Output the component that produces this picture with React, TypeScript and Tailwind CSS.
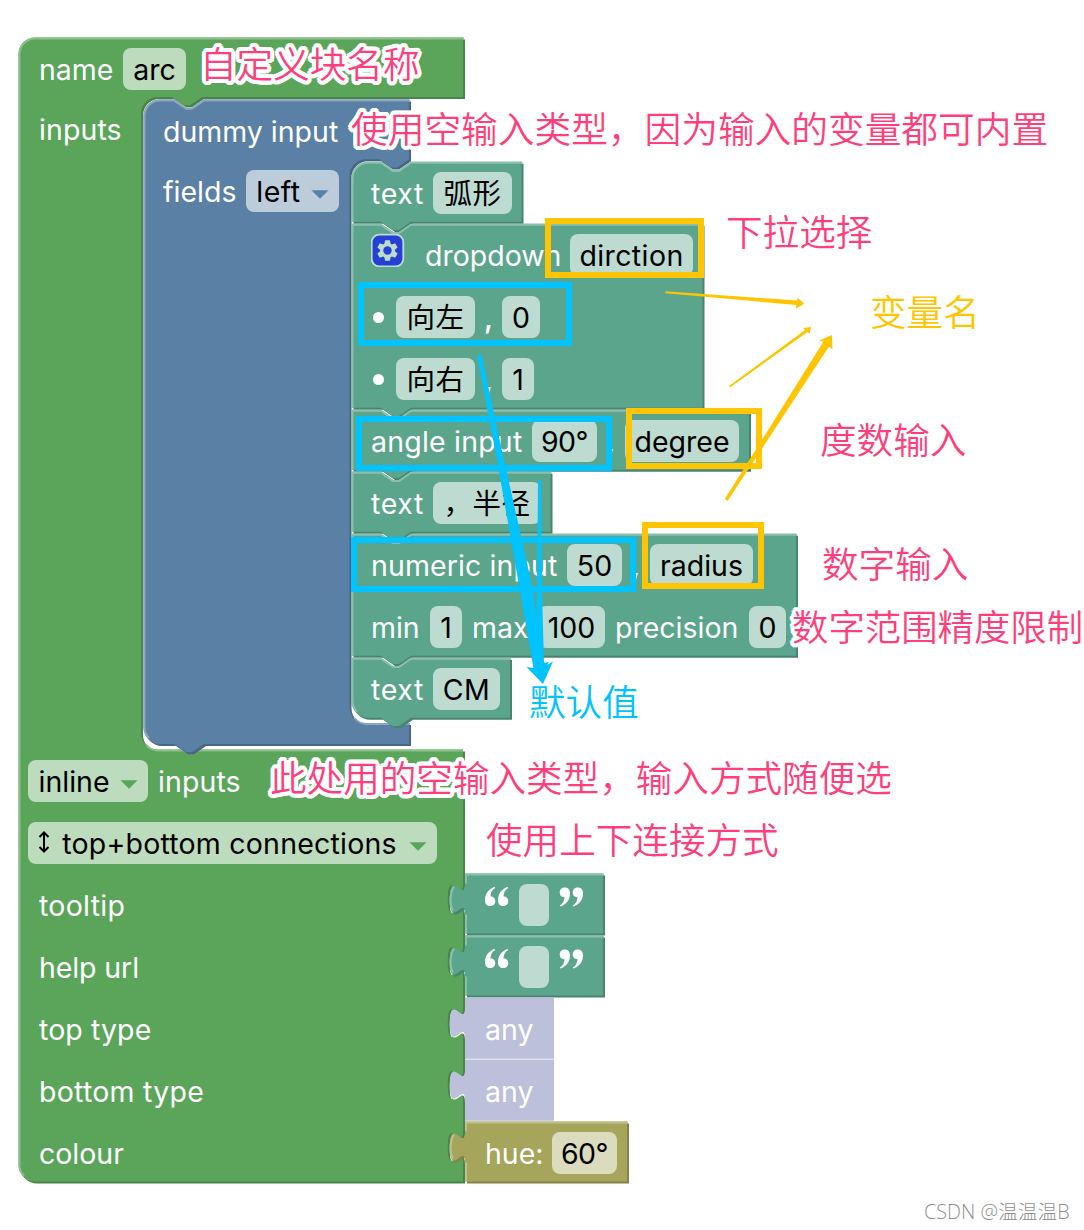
import type { ReactNode } from "react";

const palette = {
  green: { main: "#5ba55b", light: "#8cc08c", dark: "#498449" },
  blue: { main: "#5b80a5", light: "#8ca6c0", dark: "#496684" },
  teal: { main: "#5ba58c", light: "#8cc0ae", dark: "#498470" },
  olive: { main: "#a5a55b", light: "#c0c08c", dark: "#848449" },
  lilac: { main: "#bdc0db", light: "#bdc0db", dark: "#ffffff" },
};
type Hue = keyof typeof palette;

/** Bevelled puzzle outline: shadow edge, face, then highlight. */
function Outline({ hue, face, light, x = 0, y = 0 }: { hue: Hue; face: string; light: string; x?: number; y?: number }) {
  const c = palette[hue];
  return (
    <svg className="pointer-events-none absolute left-0 top-0 overflow-visible" width="1" height="1" aria-hidden="true">
      <g transform={`translate(${-x} ${-y})`}>
        <path d={face} fill={c.dark} transform={hue === "lilac" ? "translate(.8 .8)" : "translate(2 2)"} />
        <path d={face} fill={c.main} />
        <path d={light} fill="none" stroke={c.light} strokeWidth="2" />
      </g>
    </svg>
  );
}

const notch = "l12,8.3 h6 l12,-8.3";
const notchBack = "l-12,8.3 h-6 l-12,-8.3";
const tab = "c0,20.7 -15.2,-16.6 -15.2,15.5 s15.2,-5.2 15.2,15.5";

const greenFace = `M18.5,54 A16.5,16.5 0 0 1 35,37.5 H463 V97 H202 ${notchBack} H157.5 A16.5,16.5 0 0 0 141,113.5 V733 A16.5,16.5 0 0 0 157.5,749.5 H463 V883.5 ${tab} V945.5 ${tab} V1007.5 ${tab} V1069.5 ${tab} V1131.5 ${tab} V1181.5 H35 A16.5,16.5 0 0 1 18.5,1165 Z`;
const greenLight = "M24,1176 A15.5,15.5 0 0 1 19.5,1165 V54 A15.5,15.5 0 0 1 35,38.5 H464 M146,744.5 A15.5,15.5 0 0 0 157.5,750.5 H463";
const blueFace = `M143.5,116 A16.5,16.5 0 0 1 160,99.5 H174 ${notch} H409 V159.3 ${notchBack} H366 A16.5,16.5 0 0 0 349.5,176 V706.5 A16.5,16.5 0 0 0 366,723 H409 V744 H204 ${notchBack} H160 A16.5,16.5 0 0 1 143.5,727.5 Z`;
const blueLight = `M149,738 A15.5,15.5 0 0 1 144.5,727.5 V116 A15.5,15.5 0 0 1 160,100.5 H174 ${notch} H410 M354.5,718 A15.5,15.5 0 0 0 366,724 H410`;

function Label({ w, children, track = "tracking-[0px]" }: { w: string; children: ReactNode; track?: string }) {
  return <span className={`shrink-0 whitespace-nowrap pt-0.5 text-white ${w} ${track}`}>{children}</span>;
}

function Comma({ w }: { w: string }) {
  return <span className={`shrink-0 pt-0.5 font-semibold text-white ${w}`}>,</span>;
}

function Field({ w, children, track = "tracking-[0px]" }: { w: string; children?: ReactNode; track?: string }) {
  return (
    <span className={`flex h-[42px] shrink-0 items-center justify-center whitespace-nowrap rounded-lg bg-white/60 pt-0.5 text-black ${w} ${track}`}>
      {children}
    </span>
  );
}

function Caret({ color }: { color: string }) {
  return (
    <svg width="18" height="9" viewBox="0 0 18 9" className="mt-1 shrink-0">
      <path d="M.4 .3H17.6L9 8.7Z" fill={color} />
    </svg>
  );
}

function Row({ children, className = "" }: { children?: ReactNode; className?: string }) {
  return <div className={`relative flex h-[62px] items-center ${className}`}>{children}</div>;
}

/** Statement block of the field stack; width and height describe its face. */
function FieldBlock({ w, h = 60, first, last, children }: { w: number; h?: number; first?: boolean; last?: boolean; children: ReactNode }) {
  const top = first ? "M.5,16.5 A16.5,16.5 0 0 1 17,0 H30" : "M.5,0 H30";
  const foot = last ? `H17 A16.5,16.5 0 0 1 .5,${h - 16.5} Z` : "H.5 Z";
  const face = `${top} ${notch} H${w} V${h} H60 ${notchBack} ${foot}`;
  const edge = first ? `M1.5,${h} V16.5 A15.5,15.5 0 0 1 17,1 H30` : last ? `M6,${h - 6} A15.5,15.5 0 0 1 1.5,${h - 16.5} V1 H30` : `M1.5,${h} V1 H30`;
  return (
    <div className="relative pl-5">
      <Outline hue="teal" face={face} light={`${edge} ${notch} H${w + 1}`} y={0.2} />
      {children}
    </div>
  );
}

function ValueBlock({ hue, w, children }: { hue: Hue; w: number; children: ReactNode }) {
  const h = hue === "lilac" ? 61.2 : 60;
  const plug = "c0,-20.7 -15.2,16.6 -15.2,-15.5 s15.2,5.2 15.2,-15.5";
  return (
    <div className="relative">
      <Outline
        hue={hue}
        face={`M0,0 H${w} V${h} H0 V41 ${plug} Z`}
        light={hue === "lilac" ? "" : `M1,${h} V41 M-12,37 C-15.5,32 -15,18 -11,13 M1,10 V1 H${w + 1}`}
        y={0.4}
      />
      <Row className="gap-2.5 pl-5">{children}</Row>
    </div>
  );
}

function Gear() {
  return (
    <svg width="34" height="34" viewBox="-16.5 -17.5 34 34" className="-mt-2.5 shrink-0">
      <rect x="-15.8" y="-15.8" width="31.6" height="31.6" rx="7.5" fill="#2541d5" stroke="#bedbd1" strokeWidth="1.8" />
      <g fill="#bedbd1">
        {[0, 60, 120, 180, 240, 300].map((a) => (
          <path key={a} d="M-3.2,-6 L-2.4,-10.3 H2.4 L3.2,-6 Z" transform={`rotate(${a})`} />
        ))}
        <circle r="7.4" />
      </g>
      <circle r="4.2" fill="#2541d5" />
    </svg>
  );
}

function Quote({ closing }: { closing?: boolean }) {
  const one = "M9.5,0 C4,2 0,6.5 0,13 C0,17 2,19 5.2,19 C8.2,19 10.3,17 10.3,14 C10.3,11.2 8.5,9.4 5.5,9.2 C5.6,5.6 7,2.8 10.3,.9 Z";
  return (
    <svg width="24" height="20" viewBox="0 0 24 20" className="-mt-4 shrink-0">
      <g fill="#fff" transform={closing ? "rotate(180 12 9.7)" : undefined}>
        <path d={one} />
        <path d={one} transform="translate(13 0)" />
      </g>
    </svg>
  );
}

function Bullet() {
  return <span className="ml-[2px] mr-[12px] size-[11px] shrink-0 rounded-full bg-white" />;
}

const halo =
  "[text-shadow:4px_0_#fff,3.7px_1.5px_#fff,2.8px_2.8px_#fff,1.5px_3.7px_#fff,0_4px_#fff,-1.5px_3.7px_#fff,-2.8px_2.8px_#fff,-3.7px_1.5px_#fff,-4px_0_#fff,-3.7px_-1.5px_#fff,-2.8px_-2.8px_#fff,-1.5px_-3.7px_#fff,0_-4px_#fff,1.5px_-3.7px_#fff,2.8px_-2.8px_#fff,3.7px_-1.5px_#fff,2px_0_#fff,-2px_0_#fff,0_2px_#fff,0_-2px_#fff]";

function Note({ at, color = "text-[#ff3f7c]", size = "text-[36.6px]", children }: { at: string; color?: string; size?: string; children: ReactNode }) {
  return (
    <span
      className={`absolute whitespace-nowrap font-['Noto_Sans_CJK_SC',sans-serif] font-[350] leading-[48px] ${size} ${halo} ${color} ${at}`}
    >
      {children}
    </span>
  );
}

function Markup() {
  return (
    <div className="pointer-events-none absolute inset-0">
      <div className="absolute left-[545px] top-[218px] h-[60px] w-[159px] border-6 border-[#ffc500]" />
      <div className="absolute left-[358px] top-[282px] h-[64px] w-[214px] border-6 border-[#00c3ff]" />
      <div className="absolute left-[356px] top-[416px] h-[55px] w-[256px] border-6 border-[#00c3ff]" />
      <div className="absolute left-[351px] top-[537px] h-[55px] w-[285px] border-6 border-[#00c3ff]" />
      <div className="absolute left-[626px] top-[408px] h-[61px] w-[136px] border-6 border-[#ffc500]" />
      <div className="absolute left-[642px] top-[522px] h-[67px] w-[122px] border-6 border-[#ffc500]" />
      <Note at="left-[200px] top-[39px]">自定义块名称</Note>
      <Note at="left-[351px] top-[103px]" size="text-[36.7px]">使用空输入类型，因为输入的变量都可内置</Note>
      <Note at="left-[726px] top-[207px]">下拉选择</Note>
      <Note at="left-[870px] top-[287px]" color="text-[#ffc500]">变量名</Note>
      <Note at="left-[820px] top-[415px]">度数输入</Note>
      <Note at="left-[822px] top-[539px]">数字输入</Note>
      <Note at="left-[792px] top-[601px]" size="text-[36.4px]">数字范围精度限制</Note>
      <Note at="left-[529px] top-[677px]" color="text-[#00c3ff]">默认值</Note>
      <Note at="left-[270px] top-[753px]">此处用的空输入类型，输入方式随便选</Note>
      <Note at="left-[486px] top-[815px]">使用上下连接方式</Note>
      <svg className="absolute inset-0" width="1084" height="1230" aria-hidden="true">
        <g fill="#ffc500">
          <path d="M665.5,291.3 L797,300.5 797.5,297.7 804.3,303.7 795.8,308.7 796.3,305 665.5,293.3Z" />
          <path d="M729,386 L805,330 803.5,328 811,327 809.5,334 807.5,332 730,387.5Z" />
          <path d="M724.8,499 L823.5,341.5 819.3,340.5 832,335 832.5,349.5 829,346.5 727.5,501Z" />
        </g>
        <g fill="#00c3ff">
          <path d="M477,356 Q478.5,352.5 481.5,355 L504,460 L533.5,592 L538,640 L544,663 L549,662 L547,665 L553,661.5 L543,684 L526.5,667 L533.5,668 L497,460 Z" />
          <path d="M538,481 Q540,478.5 541,481 L542,592 L544,664 L534,664 L537,592 Z" />
        </g>
      </svg>
    </div>
  );
}

export default function App() {
  return (
    <main className="relative h-[1230px] w-[1084px] overflow-hidden bg-white pl-[19px] pt-[37px] font-['Inter','Noto_Sans_CJK_SC',sans-serif] text-[28.5px] leading-none">
      <section className="relative">
        <Outline hue="green" face={greenFace} light={greenLight} x={19} y={37} />
        <Row className="gap-2.5 pl-5 pt-0.5">
          <Label w="w-[74px]">name</Label>
          <Field w="w-[63px]">arc</Field>
        </Row>
        <div className="relative flex h-[651px]">
          <div className="w-[124px] shrink-0 pl-5">
            <Row className="pb-0.5">
              <Label w="w-[84px]" track="tracking-[0.1px]">inputs</Label>
            </Row>
          </div>
          <section className="relative w-[268px] shrink-0">
            <Outline hue="blue" face={blueFace} light={blueLight} x={143} y={99} />
            <Row className="pl-5 pt-0.5">
              <Label w="w-[178px]">dummy input</Label>
            </Row>
            <div className="relative flex">
              <div className="w-[208px] shrink-0 pl-5">
                <Row className="gap-2.5 pb-0.5">
                  <Label w="w-[73px]">fields</Label>
                  <Field w="w-[93px]" track="tracking-[0.5px]">
                    <span className="mr-2.5">left</span>
                    <Caret color="#5b80a5" />
                  </Field>
                </Row>
              </div>
              <div className="shrink-0 pt-[1px]">
                <FieldBlock first w={170.5}>
                  <Row className="gap-2.5">
                    <Label w="w-[52px]" track="tracking-[0.6px]">text</Label>
                    <Field w="w-[79px]" track="tracking-[0.5px]">弧形</Field>
                  </Row>
                </FieldBlock>
                <FieldBlock w={351.5} h={184}>
                  <Row>
                    <Gear />
                    <span className="w-5" />
                    <Label w="w-[145px]">dropdown</Label>
                    <Field w="w-[123px]" track="tracking-[0.4px]">dirction</Field>
                  </Row>
                  <Row>
                    <Bullet />
                    <Field w="w-[79px]" track="tracking-[0.5px]">向左</Field>
                    <span className="w-[9px]" />
                    <Comma w="w-[18px]" />
                    <Field w="w-[38px]">0</Field>
                  </Row>
                  <Row>
                    <Bullet />
                    <Field w="w-[79px]" track="tracking-[0.5px]">向右</Field>
                    <span className="w-[9px]" />
                    <Comma w="w-[18px]" />
                    <Field w="w-[32px]">1</Field>
                  </Row>
                </FieldBlock>
                <FieldBlock w={398}>
                  <Row>
                    <Label w="w-[161px]" track="tracking-[0.2px]">angle input</Label>
                    <Field w="w-[65px]" track="tracking-[-0.5px]">90°</Field>
                    <span className="w-[9px]" />
                    <Comma w="w-[19px]" />
                    <Field w="w-[114px]">degree</Field>
                  </Row>
                </FieldBlock>
                <FieldBlock w={199.5}>
                  <Row className="gap-2.5">
                    <Label w="w-[52px]" track="tracking-[0.6px]">text</Label>
                    <Field w="w-[108px]" track="tracking-[0.5px]">，半径</Field>
                  </Row>
                </FieldBlock>
                <FieldBlock w={445} h={122}>
                  <Row>
                    <Label w="w-[196px]" track="tracking-[0.1px]">numeric input</Label>
                    <Field w="w-[55px]">50</Field>
                    <span className="w-[9px]" />
                    <Comma w="w-[19px]" />
                    <Field w="w-[103px]">radius</Field>
                  </Row>
                  <Row className="gap-2.5">
                    <Label w="w-[49px]">min</Label>
                    <Field w="w-[32px]">1</Field>
                    <Label w="w-[56px]">max</Label>
                    <Field w="w-[67px]">100</Field>
                    <Label w="w-[124px]">precision</Label>
                    <Field w="w-[37px]">0</Field>
                  </Row>
                </FieldBlock>
                <FieldBlock last w={159}>
                  <Row className="gap-2.5">
                    <Label w="w-[52px]" track="tracking-[0.6px]">text</Label>
                    <Field w="w-[67px]" track="tracking-[0.4px]">CM</Field>
                  </Row>
                </FieldBlock>
              </div>
            </div>
          </section>
        </div>
        <Row className="gap-2.5 pl-[9px]">
          <Field w="w-[120px]">
            <span className="mr-2.5">inline</span>
            <Caret color="#5ba55b" />
          </Field>
          <Label w="w-[84px]" track="tracking-[0.1px]">inputs</Label>
        </Row>
        <Row className="pl-[9px]">
          <Field w="w-[409px]" track="tracking-[0.22px]">
            <svg width="12" height="22" viewBox="0 0 12 22" className="-mt-1 mr-3 shrink-0" fill="none" stroke="#000" strokeWidth="2">
              <path d="M6 2V20M1.5 6L6 1.5L10.5 6M1.5 16L6 20.5L10.5 16" />
            </svg>
            <span className="mr-3">top+bottom connections</span>
            <Caret color="#5ba55b" />
          </Field>
        </Row>
        <div className="flex">
          <div className="w-[446px] pl-5">
            <Row><Label w="w-[87px]" track="tracking-[0.3px]">tooltip</Label></Row>
            <Row><Label w="w-[100px]" track="tracking-[-0.1px]">help url</Label></Row>
            <Row><Label w="w-[113px]" track="tracking-[0.1px]">top type</Label></Row>
            <Row><Label w="w-[166px]" track="tracking-[0.25px]">bottom type</Label></Row>
            <Row><Label w="w-[85px]">colour</Label></Row>
          </div>
          <div>
            {["tooltip", "help"].map((k) => (
              <ValueBlock key={k} hue="teal" w={138}>
                <Quote />
                <Field w="w-[30px]" />
                <Quote closing />
              </ValueBlock>
            ))}
            <ValueBlock hue="lilac" w={89}><Label w="w-[48px]">any</Label></ValueBlock>
            <ValueBlock hue="lilac" w={89}><Label w="w-[48px]">any</Label></ValueBlock>
            <ValueBlock hue="olive" w={162}>
              <Label w="w-[57px]">hue:</Label>
              <Field w="w-[65px]" track="tracking-[-0.5px]">60°</Field>
            </ValueBlock>
          </div>
        </div>
      </section>
      <Markup />
      <span className="absolute left-[924px] top-[1199px] whitespace-nowrap font-['Open_Sans','Noto_Sans_CJK_SC',sans-serif] text-[19.8px] font-light leading-[26px] text-[#909090]">
        CSDN @温温温B
      </span>
    </main>
  );
}
